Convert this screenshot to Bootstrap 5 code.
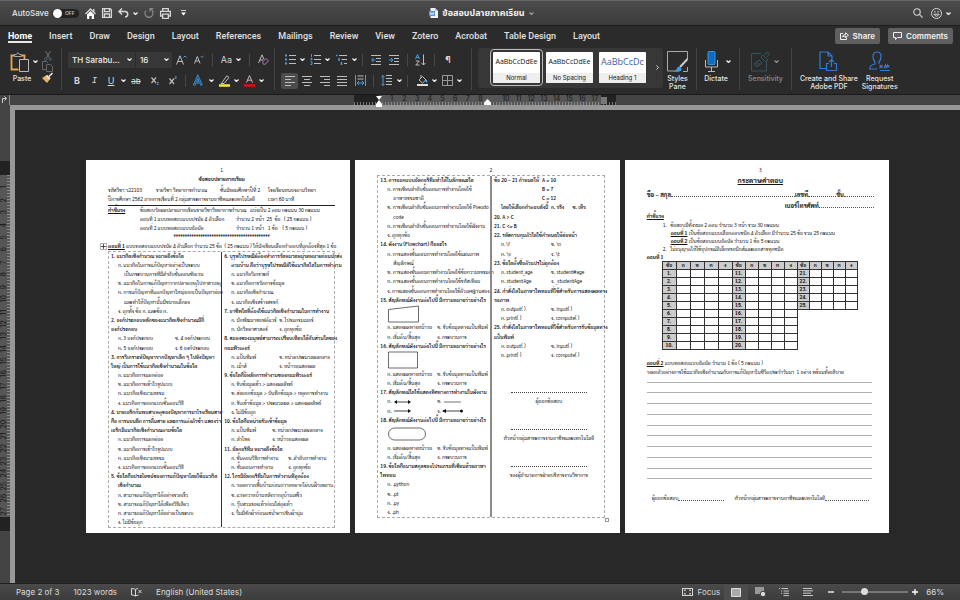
<!DOCTYPE html>
<html lang="th">
<head>
<meta charset="utf-8">
<meta name="viewport" content="width=device-width, initial-scale=1">
<title>ข้อสอบปลายภาคเรียน</title>
<link rel="stylesheet" href="https://cdn.jsdelivr.net/npm/bootstrap@5.3.0/dist/css/bootstrap.min.css">
<style>
body{font-family:Inter,"Liberation Sans","Noto Sans Thai",sans-serif;font-size:8px;line-height:8px;color:#e4e4e4;background:#282828}
svg{display:block;flex:none;overflow:visible;fill:none;stroke:currentColor}
button.btn{--bs-btn-padding-x:0;--bs-btn-padding-y:0;--bs-btn-border-width:0;--bs-btn-color:#d6d6d6;--bs-btn-hover-color:#fff;--bs-btn-line-height:1;--bs-btn-border-radius:2px;--bs-btn-font-size:8px;display:flex;align-items:center;justify-content:center;white-space:nowrap}
.chev{width:5px;height:3px;stroke:#eee;stroke-width:1.3}
/* title bar */
.titlebar{height:26px;background:linear-gradient(#4b4b4b,#3c3c3c);border-top:1px solid #666;border-bottom:1px solid #1f1f1f;padding:0 9px 0 12px}
.titlebar>div{flex:1 1 0}
.titlebar>.doc-title{flex:0 0 auto;font-size:9px;line-height:16px;font-weight:700;color:#f2f2f2}
.quick{gap:6px}
.autosave{font-weight:500;gap:3px}
.autosave .form-check-input{width:27px;height:9px;margin:0;border:0;border-radius:5px;background:#222;box-shadow:none}
.switch-wrap{position:relative}
.switch-wrap::before{content:"";position:absolute;left:1px;top:0;width:9px;height:9px;border-radius:50%;background:#fff;z-index:1}
.switch-wrap span{position:absolute;right:4px;top:1px;font-size:5px;line-height:7px;color:#ccc;pointer-events:none}
/* ribbon */
.ribbon{background:#2b2b2b;border-bottom:1px solid #1a1a1a}
.tabs{height:21px;padding:0 7px 0 8px}
.tabs .nav{gap:17px}
.tabs .nav-link{padding:5px 0 0;font-family:Roboto,Inter,sans-serif;font-size:9px;line-height:10px;font-weight:500;color:#e0e0e0;border-bottom:2px solid transparent}
.tabs .nav-link.active{color:#fff;font-weight:700;border-color:#e8e8e8}
button.pill{background:#606060;color:#f0f0f0;font-weight:600;height:16px;padding:0 5px;gap:4px;margin-top:2px}
.tools{height:47px;padding:1px 0 4px 10px}
.vr-l{width:1px;background:#444;align-self:stretch;margin-right:6px;flex:none}
.vr-s{width:1px;height:12px;background:#484848;justify-self:center}
button.big{color:#e4e4e4;font-size:7px;font-weight:500;line-height:8px;text-align:center;flex-direction:column;padding-top:3px;gap:3px}
.rows{padding-top:3px}
.grid-row{display:grid;align-items:center;justify-items:center;height:17px}
.grid-row svg{color:#bdbdbd}
.grid-row .btn{width:100%;height:16px}
.font-1{grid-template-columns:67px 37px 18px 18px 8px 30px 6px 22px;column-gap:0}
.font-2{grid-template-columns:18px 17px 16px 8px 18px 19px 17px 8px 18px 8px 18px 7px 18px 7px}
.par-1{grid-template-columns:18px 7px 18px 7px 20px 6px 10px 18px 18px 8px 18px 10px 18px}
.par-2{grid-template-columns:17px 18px 18px 16px 20px 6px 20px 6px 11px 18px 7px 18px 7px}
.form-select.combo{--bs-form-select-bg-img:url("data:image/svg+xml,%3csvg xmlns='http://www.w3.org/2000/svg' viewBox='0 0 5 3'%3e%3cpath fill='none' stroke='%23eee' stroke-width='1.2' d='M.5.5l2 2 2-2'/%3e%3c/svg%3e");background-color:#373737;color:#eee;border:0;border-radius:2px;font-size:8px;font-weight:500;line-height:10px;height:16px;min-height:0;padding:0 10px 0 4px;background-size:5px 3px;background-position:right 3px center;justify-self:stretch}
.combo.size{margin-left:1px;width:auto}
button.glyph{font-size:9px;line-height:12px}
.sel{background:#4c4c4c!important}
.gallery{background:#373737;border-radius:3px;padding:0 4px 1px 15px;gap:6px;height:40px}
button.tile{background:#fff;color:#111;width:47px;height:31px;flex-direction:column;justify-content:space-between!important;font-family:"Open Sans","Noto Sans",sans-serif;font-size:7px;overflow:hidden;border-radius:1px!important}
.tile b{font-weight:400;line-height:20px;height:21px}
.tile small{font-family:Inter,sans-serif;font-size:6px;line-height:10px;background:#eee;width:100%}
.tile.cur{outline:1px solid #bbb;outline-offset:2px}
.tile .h1x{font-size:9px;color:#3b5f98}
/* rulers and workspace */
.ruler-h{height:10px;background:#444}
.corner{width:10px;border-right:1px solid #8d8d8d;color:#ccc}
.scale{width:262px;position:relative;font-size:7px;line-height:8px;background:repeating-linear-gradient(90deg,#777 0 1px,transparent 1px 3px) bottom/100% 3px no-repeat #222}
.scale .live{margin-left:25px;width:222px;color:#161616;background:repeating-linear-gradient(90deg,#8a8a8a 0 1px,transparent 1px 3px) bottom/100% 3px no-repeat #565656}
.scale .live span{flex:1 1 0;min-width:0;text-align:center}
.scale .half{flex-grow:.5!important}
.scale .edge{width:6px;height:7px;background:#777;margin:2px 0 0}
.stop{position:absolute;top:1px}
.stop.a{left:21px}.stop.b{left:130px}
.rail{width:15px;background:#444;border-right:5px solid #989898;font-size:7px}
.vscale{width:10px;height:370px;background:#222;padding:14px 0}
.vscale .live{background:repeating-linear-gradient(#8a8a8a 0 1px,transparent 1px 3px) right/3px 100% no-repeat #565656;color:#161616;height:100%}
.vscale .live span{flex:1 1 0;min-height:0;writing-mode:vertical-rl;transform:rotate(180deg);text-align:center;line-height:8px;width:8px}
.vscale .half{flex-grow:.5!important}
.band{height:5px;background:#989898}
.work{min-width:0}
.desk{padding:0 71px;gap:5px;background:#282828}
/* sheets */
.sheet{flex:1 1 0;min-width:0;min-height:0;aspect-ratio:210/297;background:#fff;color:#141414;font-family:Sarabun,"TH Sarabun New","Noto Sans Thai","Noto Sans",sans-serif;font-size:5px;line-height:9px;padding:6px 15px 5px 22px}
.sheet p{margin:0;white-space:pre}
.sheet .pn{text-align:center;height:9px}
.sheet b{font-weight:700}
.sheet .q{font-weight:600}
.hd{display:grid;line-height:9px;white-space:pre}
.hd.a{grid-template-columns:48px 64px 48px 1fr}
.hd.b{grid-template-columns:160px 1fr;border-bottom:1px solid #222;padding-bottom:1px}
.hd.c{grid-template-columns:32px 96px 1fr}
.sheet .ttl{text-align:center;margin-bottom:2px}
.cols{flex:1 1 0;min-height:0;border:1px dashed #aaa;position:relative}
.cols>div{flex:1 1 0;min-width:0;display:flex;flex-direction:column;padding-left:2px}
.cols>div+div{border-left:1px solid #333}
.cols p,.cols .two,.cols .fig{flex:1 1 0;min-height:0;display:flex;align-items:center;line-height:9px}
.cols .o{padding-left:7px}
.cols .k{padding-left:13px}
.cols .two{padding-left:7px;white-space:pre}
.two>:first-child{flex:none;width:50px}
.two.s41>:first-child{width:41px}.two.s48>:first-child{width:48px}.two.s57>:first-child{width:57px}
.cols .g2{flex-grow:2}.cols .g3{flex-grow:3}.cols .g4{flex-grow:4}
.cols .sig{flex:1 1 0;justify-content:center}
.sig i{width:76px;border-bottom:1px dotted #444}
.sheet.two-up .cols{margin-bottom:10px}
.sheet.two-up .cols>div+div{border-left:2px solid #8a8a8a}
.grip{position:absolute;left:-8px;top:1px}
.nub{position:absolute;right:-5px;bottom:-5px;width:4px;height:4px;border:1px solid #999;background:#fff}
.err{text-decoration:underline wavy #d33 1px}
.dots{flex:1;border-bottom:1px dotted #555;align-self:flex-end;margin-bottom:2px}
.dots.d2{flex:0 0 28px}.dots.d3{flex:0 0 30px}.dots.d4{flex:0 0 46px}
.sheet .answer-title{text-align:center;font-size:7px;line-height:12px;margin-bottom:3px}
.sheet .form-line{font-size:6px;margin-bottom:2px}
.sheet .phone{margin-left:138px}
.notes{padding-left:16px;line-height:8px}
.notes .in{padding-left:8px}
.sheet .part{line-height:8px}
.ans{border-collapse:collapse;margin:0 0 9px 15px;width:196px;table-layout:fixed;font-size:5px;line-height:6px;text-align:center;color:#111}
.ans th,.ans td{border:1px solid #333;padding:0;height:8px;font-weight:700}
.ans th{background:#ccc}
.w14{width:14px}.w13{width:13px}.w12{width:12px}
.rules{display:flex;flex-direction:column;justify-content:space-between;height:98px;margin:5px 2px 14px 0}
.rules i{border-bottom:1px solid #b0b0b0}
.sheet .signs{padding:0 5px}
.sheet .lead-in{margin-left:10px}
/* status bar */
.status{height:17px;background:linear-gradient(#4a4a4a,#3c3c3c);border-top:1px solid #1f1f1f;padding:0 16px;gap:14px;color:#dcdcdc}
.status .zoom{width:66px;height:10px;-webkit-appearance:none;appearance:none;background:transparent;padding:0}
.zoom::-webkit-slider-runnable-track{height:2px;background:#777}
.zoom::-webkit-slider-thumb{-webkit-appearance:none;width:7px;height:7px;margin-top:-3px;border:0;border-radius:50%;background:#ddd}
.status .view{width:24px;height:16px;border-radius:0}
</style>
</head>
<body class="d-flex flex-column min-vh-100">
<svg width="0" height="0" class="position-absolute" aria-hidden="true"><defs>
<symbol id="cv" viewBox="0 0 5 3"><path d="M.5.5l2 2 2-2"/></symbol>
</defs></svg>

<header class="titlebar d-flex align-items-center">
  <div class="quick d-flex align-items-center">
    <label class="autosave d-flex align-items-center" for="auto">AutoSave <span class="switch-wrap d-flex p-0"><input class="form-check-input" type="checkbox" id="auto"><span>OFF</span></span></label>
    <button class="btn" aria-label="Home"><svg width="11" height="11" viewBox="0 0 11 11" stroke="#fff" stroke-width="1.4"><path d="M.5 6l5-5 5 5M8.800 1v3"/><path d="M2 6.500L5.500 3 9 6.500V11H6.700V8H4.300V11H2z" fill="#fff" stroke="none"/></svg></button>
    <button class="btn" aria-label="Save"><svg width="10" height="10" viewBox="0 0 10 10" stroke="#fff" stroke-width="1.300"><path d="M.6.6h7.600l1.200 1.200v7.600H.600zM2.500.600v3h5v-3M2.500 9.400V6h5v3.400"/></svg></button>
    <span class="d-flex gap-1"><button class="btn" aria-label="Undo"><svg width="11" height="10" viewBox="0 0 11 10" stroke="#fff" stroke-width="1.500"><path d="M4 .500L1 3.500l3 3M1.200 3.500H7a2.700 2.700 0 0 1 0 5.400"/></svg></button>
    <button class="btn" aria-label="Undo list"><svg class="chev"><use href="#cv"/></svg></button></span>
    <button class="btn" aria-label="Redo"><svg width="10" height="10" viewBox="0 0 10 10" stroke-width="1.200"><path stroke="#888" d="M6 3.700V.600H9.300M6.200.800Q9.500 2.500 8.900 6A4 4 0 1 1 2 2.600"/></svg></button>
    <button class="btn" aria-label="Print"><svg width="11" height="11" viewBox="0 0 11 11" stroke="#fff" stroke-width="1.300"><path d="M2.700 3V.600h5.600V3M2.700 8H.600V3.300h9.800V8H8.300M2.700 6.200h5.600v4.200H2.700z"/></svg></button>
    <button class="btn ms-1" aria-label="Customize"><svg width="5" height="6" viewBox="0 0 5 6" stroke="#fff"><path d="M0 .500h5"/><path d="M0 2.500h5L2.500 5.500z" fill="#fff" stroke="none"/></svg></button>
  </div>
  <div class="doc-title d-flex align-items-center gap-1">
    <svg width="9" height="10" viewBox="0 0 9 10" stroke="none"><path d="M1.500 0H6l3 3v7H1.500z" fill="#eef3fb" stroke="none"/><path d="M6 0l3 3H6z" fill="#b8c7de" stroke="none"/><rect y="3" width="6" height="5" fill="#5b8fd6" stroke="none"/><path d="M1 4.200l1 2.600 1-2 1 2 1-2.600" stroke="#fff" stroke-width=".7"/></svg>
    <span>ข้อสอบปลายภาคเรียน</span>
    <svg class="chev opacity-50"><use href="#cv"/></svg>
  </div>
  <div class="d-flex align-items-center justify-content-end">
    <button class="btn" aria-label="Search"><svg width="10" height="10" viewBox="0 0 10 10" stroke="#ddd" stroke-width="1.100"><circle cx="4" cy="4" r="3.200"/><path d="M6.400 6.400l3.200 3.200"/></svg></button>
    <button class="btn ms-2 gap-1" aria-label="Feedback"><svg width="11" height="11" viewBox="0 0 11 11" stroke="#ddd"><circle cx="5.500" cy="5.500" r="5"/><path d="M2.800 6.200q2.700 4 5.400 0zM3.900 3v1.600M7.100 3v1.600"/></svg><svg class="chev"><use href="#cv"/></svg></button>
  </div>
</header>

<div class="ribbon">
  <div class="tabs d-flex align-items-start justify-content-between">
    <nav class="nav flex-nowrap text-nowrap">
      <a class="nav-link active" href="#">Home</a><a class="nav-link" href="#">Insert</a><a class="nav-link" href="#">Draw</a><a class="nav-link" href="#">Design</a><a class="nav-link" href="#">Layout</a><a class="nav-link" href="#">References</a><a class="nav-link" href="#">Mailings</a><a class="nav-link" href="#">Review</a><a class="nav-link" href="#">View</a><a class="nav-link" href="#">Zotero</a><a class="nav-link" href="#">Acrobat</a><a class="nav-link" href="#">Table Design</a><a class="nav-link" href="#">Layout</a>
    </nav>
    <div class="d-flex"><button class="btn pill me-2"><svg width="9" height="8" viewBox="0 0 9 8"><path d="M3 1.500H.500v6h6V5.500M2.500 5q.500-2.500 3-2.500V.800L8.500 3.200 5.500 5.500V4Q4 4 2.500 5z"/></svg>Share</button><button class="btn pill"><svg width="9" height="8" viewBox="0 0 9 8"><path d="M.500.500h8v5H4.500l-2 2v-2h-2z"/></svg>Comments</button></div>
  </div>
  <div class="tools d-flex align-items-start">
    <div class="d-flex gap-1">
      <button class="btn big"><span class="d-flex align-items-center gap-1"><svg width="19" height="20" viewBox="0 0 19 20"><path d="M4 3.500H1.500v14h7M12 3.500h2.500V7" stroke="#e8a54b" stroke-width="1.800"/><path d="M4.500 4.500v-2H6.500Q8 -1 9.500 2.500h2v2z" stroke="#aaa"/><path d="M9.500 7.500h9v12h-9z" stroke="#bbb"/></svg><svg class="chev"><use href="#cv"/></svg></span><span class="pe-1">Paste</span></button>
      <div class="rows d-flex flex-column justify-content-between">
        <button class="btn" aria-label="Cut"><svg width="8" height="10" viewBox="0 0 8 10" stroke-width=".9"><path stroke="#777" d="M1.500 0l4 7M6.500 0l-4 7"/><circle cx="1.700" cy="8.300" r="1.200" stroke="#3d6c96"/><circle cx="6.300" cy="8.300" r="1.200" stroke="#3d6c96"/></svg></button>
        <button class="btn" aria-label="Copy"><svg width="11" height="11" viewBox="0 0 11 11"><path stroke="#666" d="M4 8.500H.500v-8h4l1.500 1.500M4.500 3.500h4l2 2v5h-6z"/></svg></button>
        <button class="btn" aria-label="Format painter"><svg width="11" height="11" viewBox="0 0 11 11"><path d="M0 6l5-3 3.500 3.500L5 11z" fill="#e9b567" stroke="none"/><path d="M4.500 3.500L8 7M7 4.500L10.500 1" stroke="#eee" stroke-width="1.600"/></svg></button>
      </div>
    </div>
    <div class="vr-l ms-2"></div>
    <div class="rows d-flex flex-column gap-1">
      <div class="grid-row font-1">
        <select class="form-select combo" aria-label="Font"><option>TH Sarabu...</option></select>
        <select class="form-select combo size" aria-label="Font size"><option>16</option></select>
        <button class="btn" aria-label="Grow font"><svg width="11" height="10" viewBox="0 0 11 10"><path d="M.500 9.500L4 .800l3.500 8.700M1.700 6.500h4.600"/><path d="M7.500 2.500L9 1l1.500 1.500" stroke="#4a9edb"/></svg></button>
        <button class="btn" aria-label="Shrink font"><svg width="10" height="9" viewBox="0 0 10 9"><path d="M.500 8.500l2.800-7 2.800 7M1.500 6h3.600"/><path d="M6.800 1l1.400 1.400L9.600 1" stroke="#4a9edb"/></svg></button>
        <span class="vr-s"></span>
        <button class="btn gap-1 glyph" aria-label="Change case">Aa<svg class="chev"><use href="#cv"/></svg></button>
        <span class="vr-s"></span>
        <button class="btn" aria-label="Clear formatting"><svg width="11" height="11" viewBox="0 0 11 11"><path d="M.500 9L4 .800 6 5.500M1.700 6H5"/><path d="M4.500 8L8 4.500l2.500 2.500L7 10.300H5.500z" stroke="#b56fc4"/></svg></button>
      </div>
      <div class="grid-row font-2">
        <button class="btn glyph fw-bold">B</button><button class="btn glyph fst-italic font-monospace">I</button><button class="btn glyph text-decoration-underline">U</button><button class="btn" aria-label="Underline style"><svg class="chev"><use href="#cv"/></svg></button>
        <button class="btn text-decoration-line-through" aria-label="Strikethrough">ab</button>
        <button class="btn" aria-label="Subscript"><svg width="8" height="9" viewBox="0 0 8 9"><path d="M.500 1.500L5 7M5 1.500L.500 7" stroke-width="1.200"/><path d="M6 6.500h1.500L6 8.500h1.600" stroke="#4a9edb" stroke-width=".8"/></svg></button>
        <button class="btn" aria-label="Superscript"><svg width="8" height="9" viewBox="0 0 8 9"><path d="M.500 2.500L5 8M5 2.500L.500 8" stroke-width="1.200"/><path d="M6 .500h1.500L6 2.500h1.600" stroke="#4a9edb" stroke-width=".8"/></svg></button>
        <span class="vr-s"></span>
        <button class="btn" aria-label="Text effects"><svg width="10" height="10" viewBox="0 0 10 10"><path d="M1 9.500L4.800.700 8.800 9.500M2.800 6.300h4" stroke="#3d92d4" stroke-width="2.400"/><path d="M1 9.500L4.800.700 8.800 9.500M2.800 6.300h4" stroke="#223" stroke-width=".6"/></svg></button><button class="btn" aria-label="Effects list"><svg class="chev"><use href="#cv"/></svg></button>
        <button class="btn" aria-label="Highlight"><svg width="11" height="12" viewBox="0 0 11 12"><path d="M3 7.500l4.800-6.700L10 2.500 5 8.500H2z"/><path d="M0 10.500h11" stroke="#f4ec3c" stroke-width="2.500"/></svg></button><button class="btn" aria-label="Highlight colors"><svg class="chev"><use href="#cv"/></svg></button>
        <button class="btn" aria-label="Font color"><svg width="11" height="12" viewBox="0 0 11 12"><path d="M2.500 7.500l3-7 3 7M3.500 5.200h4"/><path d="M0 10.500h11" stroke="#e01010" stroke-width="2.500"/></svg></button><button class="btn" aria-label="Font colors"><svg class="chev"><use href="#cv"/></svg></button>
      </div>
    </div>
    <div class="vr-l"></div>
    <div class="rows d-flex flex-column gap-1">
      <div class="grid-row par-1">
        <button class="btn" aria-label="Bullets"><svg width="11" height="11" viewBox="0 0 11 11"><path d="M4 1.500h7M4 5.500h7M4 9.500h7"/><path d="M0 1.500h2M0 5.500h2M0 9.500h2" stroke="#4a9edb" stroke-width="2"/></svg></button><button class="btn" aria-label="Bullet list"><svg class="chev"><use href="#cv"/></svg></button>
        <button class="btn" aria-label="Numbering"><svg width="11" height="11" viewBox="0 0 11 11"><path d="M4 1.500h7M4 5.500h7M4 9.500h7"/><path d="M1.500 0v3M.500 4.500h1.500v1.500H.500M.500 8h1.500v2.500H.500" stroke="#4a9edb"/></svg></button><button class="btn" aria-label="Number list"><svg class="chev"><use href="#cv"/></svg></button>
        <button class="btn" aria-label="Multilevel"><svg width="11" height="11" viewBox="0 0 11 11"><path d="M3 1.500h8M5.500 5.500H11M8 9.500h3"/><path d="M0 1.500h1.500M3 4v3M5.500 8v3" stroke="#4a9edb" stroke-width="1.500"/></svg></button><button class="btn" aria-label="Multilevel list"><svg class="chev"><use href="#cv"/></svg></button>
        <span class="vr-s"></span>
        <button class="btn" aria-label="Decrease indent"><svg width="10" height="10" viewBox="0 0 10 10"><path d="M0 .500h10M5 3.500h5M5 6.500h5M0 9.500h10"/><path d="M4.500 5H.800M2.500 3L.600 5l1.900 2" stroke="#4a9edb"/></svg></button>
        <button class="btn" aria-label="Increase indent"><svg width="10" height="10" viewBox="0 0 10 10"><path d="M0 .500h10M5 3.500h5M5 6.500h5M0 9.500h10"/><path d="M0 5h3.700M2 3l1.900 2L2 7" stroke="#4a9edb"/></svg></button>
        <span class="vr-s"></span>
        <button class="btn" aria-label="Sort"><svg width="11" height="12" viewBox="0 0 11 12"><path d="M.500 5l2-4.500 2 4.500M1.300 3.500h2.400" stroke="#4a9edb"/><path d="M.800 7h3.500L.800 11h3.700M8.500.500v10.500M6.300 8.800l2.200 2.200 2.200-2.200"/></svg></button>
        <span class="vr-s"></span>
        <button class="btn glyph fw-bold" aria-label="Show marks">¶</button>
      </div>
      <div class="grid-row par-2">
        <button class="btn sel" aria-label="Align left"><svg width="10" height="10" viewBox="0 0 10 10"><path d="M0 .500h10M0 3.500h6M0 6.500h10M0 9.500h6"/></svg></button>
        <button class="btn" aria-label="Center"><svg width="10" height="10" viewBox="0 0 10 10"><path d="M0 .500h10M2 3.500h6M0 6.500h10M2 9.500h6"/></svg></button>
        <button class="btn" aria-label="Align right"><svg width="10" height="10" viewBox="0 0 10 10"><path d="M0 .500h10M4 3.500h6M0 6.500h10M4 9.500h6"/></svg></button>
        <button class="btn" aria-label="Justify"><svg width="10" height="10" viewBox="0 0 10 10"><path d="M0 .500h10M0 3.500h10M0 6.500h10M0 9.500h10"/></svg></button>
        <button class="btn" aria-label="Distribute"><svg width="11" height="11" viewBox="0 0 11 11"><path d="M2.500 1h6M2.500 4h6" /><path d="M.500 0v11M10.500 0v11M2 8h7M4 6L2 8l2 2M7 6l2 2-2 2" stroke="#4a9edb"/></svg></button>
        <span class="vr-s"></span>
        <button class="btn" aria-label="Line spacing"><svg width="11" height="11" viewBox="0 0 11 11"><path d="M5 .500h6M5 3.500h6M5 6.500h6M5 9.500h6"/><path d="M2 .500v10M.300 2.200L2 .500l1.700 1.700M.300 8.800L2 10.500l1.700-1.700" stroke="#4a9edb"/></svg></button><button class="btn" aria-label="Spacing list"><svg class="chev"><use href="#cv"/></svg></button>
        <span class="vr-s"></span>
        <button class="btn" aria-label="Shading"><svg width="11" height="11" viewBox="0 0 11 11"><path d="M2 5L5.500 1.500 9 5 5.500 8zM4 0v3"/><path d="M9.500 5v2.500" stroke="#4a9edb" stroke-width="1.500"/><path d="M0 10h11" stroke="#ddd" stroke-width="2"/></svg></button><button class="btn" aria-label="Shading list"><svg class="chev"><use href="#cv"/></svg></button>
        <button class="btn" aria-label="Borders"><svg width="11" height="11" viewBox="0 0 11 11"><path stroke="#999" d="M.500.500h10v10H.500zM5.500.500v10M.500 5.500h10"/></svg></button><button class="btn" aria-label="Border list"><svg class="chev"><use href="#cv"/></svg></button>
      </div>
    </div>
    <div class="vr-l ms-2"></div>
    <div class="gallery d-flex align-items-center">
      <button class="btn tile cur"><b>AaBbCcDdEe</b><small>Normal</small></button>
      <button class="btn tile"><b>AaBbCcDdEe</b><small>No Spacing</small></button>
      <button class="btn tile"><b class="h1x">AaBbCcDc</b><small>Heading 1</small></button>
      <button class="btn ps-1" aria-label="More styles"><svg width="3" height="5" viewBox="0 0 3 5" stroke="#fff"><path d="M.500.500l2 2-2 2"/></svg></button>
    </div>
    <button class="btn big ms-1"><svg width="21" height="21" viewBox="0 0 21 21"><path d="M12 20H.500V.500h20V8M20.500 16v4.500H16" stroke="#aaa"/><path d="M20.500 8L13 16" stroke="#ccc" stroke-width="2"/><path d="M6 20.500q3.500-1 4-3.500 2-2.500 4 0t-2 3.500z" fill="#3d9be0" stroke="none"/></svg><span>Styles<br>Pane</span></button>
    <div class="vr-l ms-2 me-1"></div>
    <button class="btn big"><span class="d-flex align-items-center gap-2 ps-1"><svg width="13" height="21" viewBox="0 0 13 21"><rect x="3" y=".5" width="7" height="13" rx="1" fill="#0f6cbd" stroke="#3b93dd"/><path d="M.500 9v7h12V9M6.500 16v4M3 20.500h7" stroke="#bbb"/></svg><svg class="chev"><use href="#cv"/></svg></span><span>Dictate</span></button>
    <div class="vr-l ms-2 me-2"></div>
    <button class="btn big opacity-50"><span class="d-flex align-items-center gap-1"><svg width="19" height="21" viewBox="0 0 19 21" stroke="#3d7c9c"><g stroke="#3d7c9c"><path d="M10 2.500H.500V20h15v-9"/><path d="M3 13l5-4 3 3-5 4zM4.500 12l3 3M6 11l3 3M10 6l5 5 2-2-5-5zM14 4l2-3 2.500 2-2.500 3"/></g></svg><svg class="chev"><use href="#cv"/></svg></span><span>Sensitivity</span></button>
    <div class="vr-l ms-2 me-2"></div>
    <button class="btn big"><svg width="19" height="21" viewBox="0 0 19 21" stroke-width="1.200"><path stroke="#2f7bd6" d="M7 17.500H1V1h8l4 4v3M9 1v4h4M10 12.500H7.500v7h10v-7H15M12.500 16V9M10 11l2.500-2.500L15 11"/></svg><span>Create and Share<br>Adobe PDF</span></button>
    <button class="btn big ms-1"><svg width="21" height="21" viewBox="0 0 21 21" stroke-width="1.200"><path stroke="#2f7bd6" d="M8 18H.700q0-4 5.300-5V11Q4 9 4 5.500 4 1 8 1t4 4.500Q12 9 10 11v2M10.500 14l3 3M13.500 14l-3 3M15 17l1.500-3 .500 2.500L18.500 14l.500 2 1.500-1.500M11 19.500h10"/></svg><span>Request<br>Signatures</span></button>
  </div>
</div>

<div class="ruler-h d-flex">
  <div class="corner"><svg width="8" height="9" viewBox="0 0 8 9"><path d="M2.500 8V3.500H6M4.500 1.500l2 2-2 2"/></svg></div>
  <div class="scale mx-auto d-flex">
    <div class="live d-flex"><span class="half"></span><span>1</span><span>2</span><span>3</span><span>4</span><span>5</span><span>6</span><span>7</span><span>8</span><span></span><span>10</span><span>11</span><span>12</span><span>13</span><span>14</span><span>15</span><span>16</span><span>17</span></div>
    <div class="edge"></div>
    <svg class="stop a" width="8" height="11" viewBox="0 0 8 11"><path d="M1 0h6L4 4zM4 4l3 4v3H1V8z" fill="#fff" stroke="none"/></svg>
    <svg class="stop b" width="7" height="9" viewBox="0 0 7 9"><path d="M3.500 3L7 6.500V9H0V6.500z" fill="#fff" stroke="none"/></svg>
  </div>
</div>
<div class="d-flex flex-fill">
  <aside class="rail d-flex align-items-center pt-1">
    <div class="vscale"><div class="live d-flex flex-column"><span class="half"></span><span>1</span><span>2</span><span>3</span><span>4</span><span>5</span><span>6</span><span>7</span><span>8</span><span>9</span><span>10</span><span>11</span><span>12</span><span>13</span><span>14</span><span>15</span><span>16</span><span>17</span><span>18</span><span>19</span><span>20</span><span>21</span><span>22</span><span>23</span><span>24</span><span>25</span><span>26</span><span>27</span></div></div>
  </aside>
  <div class="work d-flex flex-column flex-fill">
  <div class="band"></div>
  <main class="desk d-flex flex-fill align-items-center">
    <section class="sheet d-flex flex-column">
      <p class="pn">1</p>
      <p class="ttl"><b>ข้อสอบปลายภาคเรียน</b></p>
      <div class="hd a"><span>รหัสวิชา ว22103</span><span>รายวิชา วิทยาการคำนวณ</span><span>ชั้นมัธยมศึกษาปีที่ 2</span><span>โรงเรียนหนองตานวิทยา</span></div>
      <div class="hd b"><span>ปีการศึกษา 2562 ภาคการเรียนที่ 2 กลุ่มสาระการงานอาชีพและเทคโนโลยี</span><span>เวลา 60 นาที</span></div>
      <div class="hd c"><b><u>คำชี้แจง</u></b><span>ข้อสอบวัดผลปลายภาคเรียนรายวิชาวิทยาการคำนวณ   แบ่งเป็น 2 ตอน คะแนน 30 คะแนน</span></div>
      <div class="hd c"><span></span><span>ตอนที่ 1 แบบทดสอบแบบปรนัย 4 ตัวเลือก</span><span>จำนวน 2 หน้า  25  ข้อ   ( 25 คะแนน )</span></div>
      <div class="hd c"><span></span><span>ตอนที่ 2 แบบทดสอบแบบอัตนัย</span><span>จำนวน 1 หน้า   1 ข้อ    ( 5 คะแนน )</span></div>
      <p class="text-center"><b>*******************************************</b></p>
      <p class="position-relative"><svg class="grip" width="7" height="7" viewBox="0 0 7 7"><path stroke="#777" d="M.500.500h6v6h-6z" stroke-width=".6"/><path d="M3.500 1.200v4.600M1.200 3.500h4.600" stroke="#444"/></svg><b><u>ตอนที่ 1</u></b> แบบทดสอบแบบปรนัย 4 ตัวเลือก จำนวน 25 ข้อ  ( 25 คะแนน ) ให้นักเรียนเลือกคำตอบที่ถูกต้องที่สุด 1 ข้อ</p>
      <div class="cols d-flex">
        <div>
          <p class="q">1. แนวคิดเชิงคำนวณ หมายถึงข้อใด</p><p class="o">ก. แนวคิดในการแก้ปัญหาอย่างเป็นระบบ</p><p class="k">เป็นกระบวนการที่มีลำดับขั้นตอนชัดเจน</p><p class="o">ข. แนวคิดในการแก้ปัญหาจากปลายเหตุไปหาสาเหตุ</p><p class="o">ค. การแก้ปัญหาที่แตกปัญหาใหญ่ออกเป็นปัญหาย่อย</p><p class="k">และทำให้ปัญหานั้นมีขนาดเล็กลง</p><p class="o">ง. ถูกทั้ง ข้อ ก. และข้อ ค.</p>
          <p class="q">2. องค์ประกอบหลักของแนวคิดเชิงคำนวณมีกี่</p><p class="q">องค์ประกอบ</p><div class="two s57"><span>ก. 3 องค์ประกอบ</span><span>ข. 4 องค์ประกอบ</span></div><div class="two s57"><span>ค. 5 องค์ประกอบ</span><span>ง. 6 องค์ประกอบ</span></div>
          <p class="q">3. การวิเคราะห์ปัญหาจากปัญหาเล็ก ๆ ไปยังปัญหา</p><p class="q">ใหญ่ เป็นการใช้แนวคิดเชิงคำนวณในข้อใด</p><p class="o">ก. แนวคิดการแยกย่อย</p><p class="o">ข. แนวคิดการเข้าใจรูปแบบ</p><p class="o">ค. แนวคิดเชิงนามธรรม</p><p class="o">ง. แนวคิดการออกแบบขั้นตอนวิธี</p>
          <p class="q">4. นายเอริคค้นพบสาเหตุของปัญหาการมาโรงเรียนสาย</p><p class="q">คือ การนอนดึก การตื่นสาย และการแต่งตัวช้า แสดงว่า</p><p class="q">เอริคมีแนวคิดเชิงคำนวณตามข้อใด</p><p class="o">ก. แนวคิดการแยกย่อย</p><p class="o">ข. แนวคิดการเข้าใจรูปแบบ</p><p class="o">ค. แนวคิดเชิงนามธรรม</p><p class="o">ง. แนวคิดการออกแบบขั้นตอนวิธี</p>
          <p class="q">5. ข้อใดคือประโยชน์ของการแก้ปัญหาโดยใช้แนวคิด</p><p class="q o">เชิงคำนวณ</p><p class="o">ก. สามารถแก้ปัญหาได้อย่างรวดเร็ว</p><p class="o">ข. สามารถแก้ปัญหาได้เพียงวิธีเดียว</p><p class="o">ค. สามารถแก้ปัญหาได้อย่างเป็นระบบ</p><p class="o">ง. ไม่มีข้อถูก</p>
        </div>
        <div>
          <p class="q">6. บุรุษไปรษณีย์ต้องทำการจัดหมวดหมู่จดหมายก่อนนำส่ง</p><p class="q o">ตามบ้าน ถือว่าบุรุษไปรษณีย์ใช้แนวคิดใดในการทำงาน</p><p class="o">ก. แนวคิดวิเคราะห์</p><p class="o">ข. แนวคิดการจัดการข้อมูล</p><p class="o">ค. แนวคิดเชิงคำนวณ</p><p class="o">ง. แนวคิดเชิงสร้างสรรค์</p>
          <p class="q">7. อาชีพใดที่ต้องใช้แนวคิดเชิงคำนวณในการทำงาน</p><div class="two s48"><span>ก. นักพัฒนาซอฟต์แวร์</span><span>ข. โปรแกรมเมอร์</span></div><div class="two s48"><span>ค. นักวิทยาศาสตร์</span><span>ง. ถูกทุกข้อ</span></div>
          <p class="q">8. สมองของมนุษย์สามารถเปรียบเทียบได้กับส่วนใดของ</p><p class="q">คอมพิวเตอร์</p><div class="two s48"><span>ก. แป้นพิมพ์</span><span>ข. หน่วยประมวลผลกลาง</span></div><div class="two s48"><span>ค. เม้า<span class="err">ส์</span></span><span>ง. หน้าจอแสดงผล</span></div>
          <p class="q">9. ข้อใดคือหลักการทำงานของคอมพิวเตอร์</p><p class="o">ก. รับข้อมูลเข้า &gt; แสดงผลลัพธ์</p><p class="o">ข. ส่งออกข้อมูล &gt; บันทึกข้อมูล &gt; หยุดการทำงาน</p><p class="o">ค. รับเข้าข้อมูล &gt; ประมวลผล &gt; แสดงผลลัพธ์</p><p class="o">ง. ไม่มีข้อถูก</p>
          <p class="q">10. ข้อใดคือหน่วยรับเข้าข้อมูล</p><div class="two s41"><span>ก. แป้นพิมพ์</span><span>ข. หน่วยประมวลผลกลาง</span></div><div class="two s41"><span>ค. ลำโพง</span><span>ง. หน้าจอแสดงผล</span></div>
          <p class="q">11. อัลกอริทึม หมายถึงข้อใด</p><div class="two s57"><span>ก. ขั้นตอนวิธีการทำงาน</span><span>ข. ลำดับการทำงาน</span></div><div class="two s57"><span>ค. ขั้นตอนการทำงาน</span><span>ง. ถูกทุกข้อ</span></div>
          <p class="q">12. ใครมีอัลกอริทึมในการทำงานที่ถูกต้อง</p><p class="o">ก. จอยกวาดพื้นบ้านก่อนกวาดหยากไย่บนฝ้าเพดาน</p><p class="o">ข. แจงกวาดบ้านหลังจากถูบ้านเสร็จ</p><p class="o">ค. <span class="err">จุ๊</span>บสวมรองเท้าก่อนใส่ถุงเท้า</p><p class="o">ง. จิมมี่ซักผ้าก่อนแช่น้ำยาปรับผ้านุ่ม</p><p></p>
        </div>
      </div>
    </section>

    <section class="sheet two-up d-flex flex-column">
      <p class="pn">2</p>
      <div class="cols d-flex"><span class="nub"></span>
        <div class="order-first">
          <p class="q">13. การออกแบบอัลกอริทึมทำได้ในลักษณะใด</p><p class="o">ก. การเขียนลำดับขั้นตอนการทำงานโดยใช้</p><p class="k">ภาษาธรรมชาติ</p><p class="o">ข. การเขียนลำดับขั้นตอนการทำงานโดยใช้ Pseudo</p><p class="k">code</p><p class="o">ค. การเขียนลำดับขั้นตอนการทำงานโดยใช้ผังงาน</p><p class="o">ง. ถูกทุกข้อ</p>
          <p class="q">14. ผังงาน (Flowchart) คืออะไร</p><p class="o">ก. การแสดงขั้นตอนการทำงานโดยใช้แผนภาพ</p><p class="k">สัญลักษณ์</p><p class="o">ข. การแสดงขั้นตอนการทำงานโดยใช้ข้อความธรรมดา</p><p class="o">ค. การแสดงขั้นตอนการทำงานโดยใช้รหัสเทียม</p><p class="o">ง. การแสดงขั้นตอนการทำงานโดยใช้ตัวเลขฐานสอง</p>
          <p class="q">15. สัญลักษณ์ผังงานต่อไปนี้ มีความหมายว่าอย่างไร</p><div class="fig g2 o"><svg width="32" height="18" viewBox="0 0 32 18" stroke-width=".8"><path stroke="#444" d="M1.500 4.500L31.500 1v16h-30z"/></svg></div><div class="two"><span>ก. แสดงผลทางหน้าจอ</span><span>ข. รับข้อมูลทางแป้นพิมพ์</span></div><div class="two"><span>ค. เริ่มต้น/สิ้นสุด</span><span>ง. กระบวนการ</span></div>
          <p class="q">16. สัญลักษณ์ผังงานต่อไปนี้ มีความหมายว่าอย่างไร</p><div class="fig g2 o"><svg width="32" height="18" viewBox="0 0 32 18" stroke-width=".8"><path stroke="#444" d="M1.500 1h29v16h-29z"/></svg></div><div class="two"><span>ก. แสดงผลทางหน้าจอ</span><span>ข. รับข้อมูลทางแป้นพิมพ์</span></div><div class="two"><span>ค. เริ่มต้น/สิ้นสุด</span><span>ง. กระบวนการ</span></div>
          <p class="q">17. สัญลักษณ์ใดใช้แสดงทิศทางการทำงานในผังงาน</p><div class="two"><span class="d-flex align-items-center">ก.  <svg width="17" height="4" viewBox="0 0 17 4"><path d="M1 2h15" stroke-width=".8"/><path d="M3 0L0 2l3 2zM14 0l3 2-3 2z" fill="#111" stroke="none"/></svg></span><span class="d-flex align-items-center">ข.  <svg width="17" height="4" viewBox="0 0 17 4"><path d="M0 2h17" stroke-width=".6"/></svg></span></div><div class="two"><span class="d-flex align-items-center">ค.  <svg width="17" height="4" viewBox="0 0 17 4"><path d="M0 2h15" stroke-width=".8"/><path d="M14 0l3 2-3 2z" fill="#111" stroke="none"/></svg></span><span class="d-flex align-items-center">ง. <svg width="21" height="4" viewBox="0 0 21 4"><path d="M1 2h19" stroke-width=".8"/><path d="M4 0L0 2l4 2z" fill="#111" stroke="none"/><circle cx="19.500" cy="2" r="1.500" fill="#111" stroke="none"/></svg></span></div>
          <p class="q">18. สัญลักษณ์ผังงานต่อไปนี้ มีความหมายว่าอย่างไร</p><div class="fig g2 o"><svg width="40" height="14" viewBox="0 0 40 14" stroke-width=".8"><rect stroke="#444" x="1.500" y="1" width="37" height="12" rx="6"/></svg></div><div class="two"><span>ก. แสดงผลทางหน้าจอ</span><span>ข. รับข้อมูลทางแป้นพิมพ์</span></div><div class="two"><span>ค. เริ่มต้น/สิ้นสุด</span><span>ง. กระบวนการ</span></div>
          <p class="q">19. ข้อใดคือนามสกุลของโปรแกรมที่เขียนด้วยภาษา</p><p class="q">ไพทอน</p><p class="o">ก. .python</p><p class="o">ข. .pt</p><p class="o">ค. .py</p><p class="o">ง. .ph</p>
        </div>
        <div>
          <div class="two q ps-0 s48"><span>ข้อ 20 – 21 กำหนดให้</span><span>A = 10</span></div><div class="two q ps-0 s48"><span></span><span>B = 7</span></div><div class="two q ps-0 s48"><span></span><span>C = 12</span></div><div class="two q"><span>โดยให้เลือกคำตอบดังนี้</span><span>ก. จริง       ข. เท็จ</span></div><p class="q">20. A &gt; C</p><p class="q">21. C &lt;= B</p>
          <p class="q">22. รหัสควบคุมตัวใดใช้กำหนดให้ย่อหน้า</p><div class="two"><span>ก. \f</span><span>ข. \n</span></div><div class="two"><span>ค. \v</span><span>ง. \t</span></div>
          <p class="q">23. ข้อใดตั้งชื่อตัวแปรไม่ถูกต้อง</p><div class="two"><span>ก. student_age</span><span>ข. student#age</span></div><div class="two"><span>ค. studentAge</span><span>ง. _studentAge</span></div>
          <p class="q">24. คำสั่งใดในภาษาไพทอนที่ใช้สำหรับการแสดงผลทาง</p><p class="q">จอภาพ</p><div class="two"><span>ก. output( )</span><span>ข. input( )</span></div><div class="two"><span>ค. print( )</span><span>ง. compute( )</span></div>
          <p class="q">25. คำสั่งใดในภาษาไพทอนที่ใช้สำหรับการรับข้อมูลทาง</p><p class="q">แป้นพิมพ์</p><div class="two"><span>ก. output( )</span><span>ข. input( )</span></div><div class="two"><span>ค. print( )</span><span>ง. compute( )</span></div>
          <p class="g3"></p><p class="sig"><i></i></p><p class="sig">ผู้ออกข้อสอบ</p><p class="g2"></p><p class="sig"><i></i></p><p class="sig">หัวหน้ากลุ่มสาระการงานอาชีพและเทคโนโลยี</p><p class="g2"></p><p class="sig"><i></i></p><p class="sig">รองผู้อำนวยการฝ่ายบริหารงานวิชาการ</p><p class="g4"></p>
        </div>
      </div>
    </section>

    <section class="sheet d-flex flex-column">
      <p class="pn">3</p>
      <p class="answer-title"><b><u>กระดาษคำตอบ</u></b></p>
      <p class="form-line d-flex"><b>ชื่อ – สกุล</b><span class="dots"></span><b>เลขที่</b><span class="dots d2"></span><b>ชั้น</b><span class="dots d3"></span></p>
      <p class="form-line phone d-flex"><b>เบอร์โทรศัพท์</b><span class="dots"></span></p>
      <p><b><u>คำชี้แจง</u></b></p>
      <div class="notes"><p>1.   ข้อสอบมีทั้งหมด 2 ตอน จำนวน 3 หน้า รวม 30 คะแนน</p><p class="in"><b><u>ตอนที่ 1</u></b> เป็นข้อสอบแบบเลือกตอบชนิด 4 ตัวเลือก มีจำนวน 25 ข้อ รวม 25 คะแนน</p><p class="in"><b><u>ตอนที่ 2</u></b> เป็นข้อสอบแบบอัตนัย จำนวน 1 ข้อ 5 คะแนน</p><p>2.   ไม่อนุญาตให้ใช้อุปกรณ์อิเล็กทรอนิกส์และเอกสารทุกชนิด</p></div>
      <p class="part"><b>ตอนที่ 1</b></p>
      <table class="ans">
        <colgroup><col class="w14" span="5"><col class="w13" span="5"><col class="w12" span="5"></colgroup>
        <tr><th>ข้อ</th><th>ก</th><th>ข</th><th>ค</th><th>ง</th><th>ข้อ</th><th>ก</th><th>ข</th><th>ค</th><th>ง</th><th>ข้อ</th><th>ก</th><th>ข</th><th>ค</th><th>ง</th></tr>
        <tr><th>1.</th><td></td><td></td><td></td><td></td><th>11.</th><td></td><td></td><td></td><td></td><th>21.</th><td></td><td></td><td></td><td></td></tr>
        <tr><th>2.</th><td></td><td></td><td></td><td></td><th>12.</th><td></td><td></td><td></td><td></td><th>22.</th><td></td><td></td><td></td><td></td></tr>
        <tr><th>3.</th><td></td><td></td><td></td><td></td><th>13.</th><td></td><td></td><td></td><td></td><th>23.</th><td></td><td></td><td></td><td></td></tr>
        <tr><th>4.</th><td></td><td></td><td></td><td></td><th>14.</th><td></td><td></td><td></td><td></td><th>24.</th><td></td><td></td><td></td><td></td></tr>
        <tr><th>5.</th><td></td><td></td><td></td><td></td><th>15.</th><td></td><td></td><td></td><td></td><th>25.</th><td></td><td></td><td></td><td></td></tr>
        <tr><th>6.</th><td></td><td></td><td></td><td></td><th>16.</th><td></td><td></td><td></td><td></td></tr>
        <tr><th>7.</th><td></td><td></td><td></td><td></td><th>17.</th><td></td><td></td><td></td><td></td></tr>
        <tr><th>8.</th><td></td><td></td><td></td><td></td><th>18.</th><td></td><td></td><td></td><td></td></tr>
        <tr><th>9.</th><td></td><td></td><td></td><td></td><th>19.</th><td></td><td></td><td></td><td></td></tr>
        <tr><th>10.</th><td></td><td></td><td></td><td></td><th>20.</th><td></td><td></td><td></td><td></td></tr>
      </table>
      <p><b><u>ตอนที่ 2</u></b> แบบทดสอบแบบอัตนัย จำนวน 1 ข้อ ( 5 คะแนน )</p>
      <p>จงยกตัวอย่างการใช้แนวคิดเชิงคำนวณกับการแก้ปัญหาในชีวิตประจำวันมา  1 อย่าง พร้อมทั้งอธิบาย</p>
      <div class="rules"><i></i><i></i><i></i><i></i><i></i><i></i><i></i><i></i><i></i><i></i></div>
      <p class="d-flex signs"><span>ผู้ออกข้อสอบ</span><span class="dots d4"></span><span class="lead-in">หัวหน้ากลุ่มสาระการงานอาชีพและเทคโนโลยี</span><span class="dots"></span></p>
    </section>
  </main>
  </div>
</div>

<footer class="status d-flex align-items-center">
  <span>Page 2 of 3</span><span>1023 words</span>
  <button class="btn" aria-label="Proofing"><svg width="11" height="9" viewBox="0 0 11 9"><path d="M4.500 8V1.500Q3 .500.500.500v6.500q2.500 0 4 1 1.500-1 3-1M4.500 1.500Q6 .500 7 .500M7.500 2l3 3M10.500 2l-3 3"/></svg></button>
  <span>English (United States)</span>
  <div class="ms-auto d-flex align-items-center">
    <button class="btn gap-1 me-1"><svg width="11" height="8" viewBox="0 0 11 8"><rect x=".5" y=".5" width="10" height="7"/><path d="M2.500 3V2H4M7 2h1.500v1M8.500 5v1H7M4 6H2.500V5"/></svg>Focus</button>
    <button class="btn view sel" aria-label="Print layout"><svg width="10" height="9" viewBox="0 0 10 9"><path d="M.500.500h9v8h-9z" fill="#aaa" stroke="#ddd"/></svg></button>
    <button class="btn view" aria-label="Web layout"><svg width="11" height="10" viewBox="0 0 11 10"><path d="M0 0h9v7H0z" fill="#999" stroke="none"/><circle cx="8" cy="7" r="2.700" fill="#ddd" stroke="#444"/></svg></button>
    <button class="btn view" aria-label="Outline"><svg width="10" height="8" viewBox="0 0 10 8"><path d="M0 .500h1M2.500.500H9M2 3h1M4.500 3H10M2 5.300h1M4.500 5.300H10M4.500 7.600H10" stroke-width=".9"/></svg></button>
    <button class="btn view" aria-label="Draft"><svg width="10" height="8" viewBox="0 0 10 8"><path d="M0 .500h9M0 2.800h10M0 5.200h8M0 7.500h10" stroke-width=".9"/></svg></button>
    <button class="btn ms-2 me-1" aria-label="Zoom out"><svg width="6" height="6" viewBox="0 0 6 6" stroke-width="1.300"><path stroke="#fff" d="M0 3h6"/></svg></button>
    <input class="zoom mx-1" type="range" min="0" max="100" value="32" aria-label="Zoom">
    <button class="btn" aria-label="Zoom in"><svg width="6" height="6" viewBox="0 0 6 6" stroke-width="1.300"><path stroke="#fff" d="M0 3h6M3 0v6"/></svg></button>
    <span class="ms-2">66%</span>
  </div>
</footer>
<script src="https://cdn.jsdelivr.net/npm/bootstrap@5.3.0/dist/js/bootstrap.bundle.min.js"></script>
</body>
</html>
